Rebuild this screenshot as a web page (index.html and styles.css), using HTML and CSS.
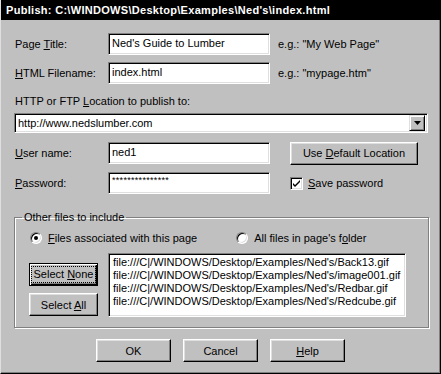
FILE: index.html
```html
<!DOCTYPE html>
<html lang="en">
<head>
    <meta charset="utf-8">
    <link rel="stylesheet" href="styles.css">
    <title>Publish</title>
</head>
<body>
<div class="window">
    <div class="titlebar">Publish: C:\WINDOWS\Desktop\Examples\Ned's\index.html</div>
    <div class="content">
        <div class="field-row first">
            <span class="field-label">Page <u>T</u>itle:</span>
            <div class="textbox">Ned's Guide to Lumber</div>
            <span class="hint">e.g.: "My Web Page"</span>
        </div>
        <div class="field-row">
            <span class="field-label"><u>H</u>TML Filename:</span>
            <div class="textbox">index.html</div>
            <span class="hint">e.g.: "mypage.htm"</span>
        </div>
        <div class="location-label">HTTP or FTP <u>L</u>ocation to publish to:</div>
        <div class="combo">
            <span class="combo-text">http://www.nedslumber.com</span>
            <span class="combo-button">
                <svg width="7" height="4" viewBox="0 0 7 4"><path d="M0 0h7L3.5 4z" fill="#000"/></svg>
            </span>
        </div>
        <div class="field-row user-row">
            <span class="field-label"><u>U</u>ser name:</span>
            <div class="textbox">ned1</div>
            <button class="btn wide-button">Use <u>D</u>efault Location</button>
        </div>
        <div class="field-row">
            <span class="field-label"><u>P</u>assword:</span>
            <div class="textbox password">***************</div>
            <label class="check">
                <span class="check-box">
                    <svg width="9" height="9" viewBox="0 0 9 9"><path d="M1 4l2 2 5-5v2L3 8 1 6z" fill="#000"/></svg>
                </span>
                <span><u>S</u>ave password</span>
            </label>
        </div>
        <fieldset class="group">
            <legend>Other files to include</legend>
            <div class="radio-row">
                <label class="radio-item">
                    <span class="radio checked"></span>
                    <span><u>F</u>iles associated with this page</span>
                </label>
                <label class="radio-item second">
                    <span class="radio"></span>
                    <span>All files in page's f<u>o</u>lder</span>
                </label>
            </div>
            <div class="files">
                <div class="side-buttons">
                    <button class="btn default"><span class="focus">Select <u>N</u>one</span></button>
                    <button class="btn">Select <u>A</u>ll</button>
                </div>
                <div class="listbox">
                    <div>file:///C|/WINDOWS/Desktop/Examples/Ned's/Back13.gif</div>
                    <div>file:///C|/WINDOWS/Desktop/Examples/Ned's/image001.gif</div>
                    <div>file:///C|/WINDOWS/Desktop/Examples/Ned's/Redbar.gif</div>
                    <div>file:///C|/WINDOWS/Desktop/Examples/Ned's/Redcube.gif</div>
                </div>
            </div>
        </fieldset>
        <div class="dialog-buttons">
            <button class="btn">OK</button>
            <button class="btn">Cancel</button>
            <button class="btn"><u>H</u>elp</button>
        </div>
    </div>
</div>
</body>
</html>
```
FILE: styles.css
```css
* {
  box-sizing: border-box;
}

body {
  margin: 0;
  background-color: #c0c0c0;
  font-family: "Liberation Sans", Arial, sans-serif;
  font-size: 11px;
  color: #000000;
}

u {
  text-decoration: underline;
  text-underline-offset: 1px;
}

.window {
  width: 441px;
  height: 374px;
  background-color: #c0c0c0;
  border-left: 1px solid #dfdfdf;
  border-right: 1px solid #000000;
  border-bottom: 1px solid #000000;
  box-shadow: inset -1px -1px 0 #808080;
  overflow: hidden;
}

.titlebar {
  height: 20px;
  line-height: 20px;
  background-color: #000000;
  color: #ffffff;
  font-weight: bold;
  font-size: 11px;
  letter-spacing: 0.3px;
  padding-left: 5px;
  white-space: nowrap;
}

.content {
  padding: 0 0 0 14px;
}

/* text rows */
.field-row {
  display: flex;
  align-items: center;
  height: 22px;
  margin-top: 7px;
}

.field-row.first {
  margin-top: 13px;
}

.field-row.user-row {
  margin-top: 9px;
  margin-bottom: 8px;
}

.field-row.user-row + .field-row {
  margin-top: 0;
}

.field-label {
  width: 93px;
  flex: none;
}

.textbox {
  width: 162px;
  height: 22px;
  line-height: 19px;
  padding-left: 3px;
  background-color: #ffffff;
  border: 1px solid;
  border-color: #808080 #ffffff #ffffff #808080;
  box-shadow: inset 1px 1px 0 #000000, inset -1px -1px 0 #dfdfdf;
  white-space: nowrap;
  flex: none;
}

.textbox.password {
  font-size: 9px;
  line-height: 15px;
  letter-spacing: 0.3px;
}

.hint {
  margin-left: 8px;
  white-space: nowrap;
}

.location-label {
  margin-top: 11px;
  height: 13px;
  line-height: 13px;
}

.combo {
  display: flex;
  align-items: center;
  margin: 5px 0 0 -1px;
  width: 414px;
  height: 20px;
  background-color: #ffffff;
  border: 1px solid;
  border-color: #808080 #ffffff #ffffff #808080;
  box-shadow: inset 1px 1px 0 #000000, inset -1px -1px 0 #dfdfdf;
  padding: 2px 2px 2px 3px;
}

.combo-text {
  flex: 1;
}

.combo-button {
  width: 16px;
  height: 16px;
  display: flex;
  align-items: center;
  justify-content: center;
  background-color: #c0c0c0;
  border: 1px solid;
  border-color: #dfdfdf #000000 #000000 #dfdfdf;
  box-shadow: inset 1px 1px 0 #ffffff, inset -1px -1px 0 #808080;
}

/* buttons */
.btn {
  font-family: inherit;
  font-size: 11px;
  color: #000000;
  background-color: #c0c0c0;
  border: 1px solid;
  border-color: #ffffff #000000 #000000 #ffffff;
  box-shadow: inset -1px -1px 0 #808080, inset 1px 1px 0 #dfdfdf;
  padding: 0;
  height: 23px;
  white-space: nowrap;
  cursor: pointer;
}

.btn.default {
  border: 1px solid #000000;
  box-shadow: inset 1px 1px 0 #ffffff, inset -1px -1px 0 #000000, inset -2px -2px 0 #808080;
}

.focus {
  display: block;
  margin: 0 2px;
  line-height: 15px;
  outline: 1px dotted #000000;
}

.wide-button {
  width: 128px;
  margin-left: 20px;
}

.check {
  display: flex;
  align-items: center;
  margin-left: 20px;
}

.check-box {
  width: 13px;
  height: 13px;
  display: flex;
  align-items: center;
  justify-content: center;
  background-color: #ffffff;
  border: 1px solid;
  border-color: #808080 #ffffff #ffffff #808080;
  box-shadow: inset 1px 1px 0 #000000, inset -1px -1px 0 #dfdfdf;
  margin-right: 5px;
}

/* group box */
.group {
  margin: 17px 0 0 -1px;
  width: 415px;
  padding: 0 0 10px 14px;
  border: 1px solid #808080;
  box-shadow: 1px 1px 0 #ffffff, inset 1px 1px 0 #ffffff;
}

.group legend {
  margin-left: -7px;
  padding: 0 2px;
  line-height: 13px;
}

.radio-row {
  display: flex;
  align-items: center;
  height: 14px;
  margin-top: 7px;
}

.radio-item {
  display: flex;
  align-items: center;
}

.radio-item.second {
  margin-left: 38px;
}

.radio {
  width: 12px;
  height: 12px;
  border-radius: 50%;
  background-color: #ffffff;
  border: 1px solid;
  border-color: #808080 #ffffff #ffffff #808080;
  box-shadow: inset 1px 1px 0 #000000, inset -1px -1px 0 #dfdfdf;
  margin: 0 6px 0 1px;
  display: flex;
  align-items: center;
  justify-content: center;
}

.radio.checked::after {
  content: "";
  width: 4px;
  height: 4px;
  border-radius: 50%;
  background-color: #000000;
}

.files {
  display: flex;
  margin-top: 8px;
}

.side-buttons {
  display: flex;
  flex-direction: column;
  gap: 7px;
  width: 69px;
  margin-top: 10px;
}

.side-buttons .btn {
  width: 69px;
}

.listbox {
  width: 298px;
  height: 64px;
  margin-left: 10px;
  background-color: #ffffff;
  border: 1px solid;
  border-color: #808080 #ffffff #ffffff #808080;
  box-shadow: inset 1px 1px 0 #000000, inset -1px -1px 0 #dfdfdf;
  padding: 2px 0 0 4px;
  line-height: 13px;
  white-space: nowrap;
  overflow: hidden;
}

.dialog-buttons {
  display: flex;
  justify-content: center;
  gap: 12px;
  margin: 11px 0 0 -14px;
}

.dialog-buttons .btn {
  width: 75px;
}
```
